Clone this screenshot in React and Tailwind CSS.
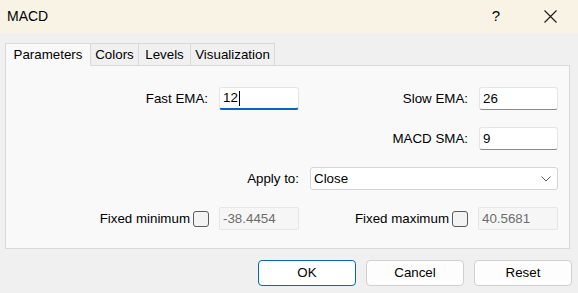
import React from "react";

function TextInput({ value, focused, w = "w-[80px]" }) {
  return (
    <div
      className={`${w} h-[23px] bg-white rounded-[3px] border border-[#e5e5e5] ${
        focused ? "border-b-2 border-b-[#0067c0]" : "border-b-[#8a8a8a]"
      } flex items-center pl-[3px] text-black`}
    >
      <span>{value}</span>
      {focused && <span className="inline-block w-px h-[15px] bg-black ml-[1px]" />}
    </div>
  );
}

function DisabledInput({ value }) {
  return (
    <div className="w-[80px] h-[23px] bg-[#f6f6f6] border border-[#e6e6e6] rounded-[2px] flex items-center pl-[3px] text-[#6d6d6d]">
      {value}
    </div>
  );
}

function Checkbox() {
  return <div className="w-[16px] h-[16px] rounded-[3px] border border-[#5b5b5b] bg-[#f3f3f3]" />;
}

function Tab({ label, selected, w }) {
  return (
    <div
      className={`${w} flex items-center justify-center border border-[#d9d9d9] border-b-0 ${
        selected ? "h-[23px] bg-[#f9f9f9] relative z-10 -mb-px pb-px" : "h-[22px] bg-[#f0f0f0] -ml-px"
      }`}
    >
      {label}
    </div>
  );
}

export default function App() {
  return (
    <div
      className="w-[578px] h-[293px] bg-[#f0f0f0] text-[13.33px] text-black overflow-hidden"
      style={{ fontFamily: '"Liberation Sans", Arial, sans-serif' }}
    >
      <div className="h-[33px] bg-[#f9f3e6] flex items-center pl-[7px]">
        <span className="text-[14px]">MACD</span>
        <span className="ml-auto text-[15px] mr-[44px] mt-[-1px]">?</span>
        <svg width="13" height="13" viewBox="0 0 13 13" className="mr-[21px]">
          <path d="M0.5 0.5 L12.5 12.5 M12.5 0.5 L0.5 12.5" stroke="#1a1a1a" strokeWidth="1.1" fill="none" />
        </svg>
      </div>

      <div className="px-[5px] pt-[10px]">
        <div className="flex items-end">
          <Tab label="Parameters" selected w="w-[86px]" />
          <Tab label="Colors" w="w-[49px]" />
          <Tab label="Levels" w="w-[53px]" />
          <Tab label="Visualization" w="w-[85px]" />
        </div>
        <div className="w-[565px] h-[184px] border border-[#d9d9d9] bg-[#f9f9f9] pt-[21px] pr-[11px] flex flex-col gap-[17px]">
          <div className="flex items-center h-[23px]">
            <div className="w-[293px] flex justify-end items-center gap-[11px]">
              <span>Fast EMA:</span>
              <TextInput value="12" focused />
            </div>
            <div className="flex-1 flex justify-end items-center gap-[11px]">
              <span>Slow EMA:</span>
              <TextInput value="26" w="w-[79px]" />
            </div>
          </div>
          <div className="flex items-center justify-end h-[23px] gap-[11px]">
            <span>MACD SMA:</span>
            <TextInput value="9" w="w-[79px]" />
          </div>
          <div className="flex items-center justify-end h-[23px] gap-[11px]">
            <span>Apply to:</span>
            <div className="w-[248px] h-[23px] bg-white border border-[#d5d5d5] rounded-[3px] flex items-center pl-[3px] pr-[6px]">
              <span>Close</span>
              <svg width="10" height="6" viewBox="0 0 10 6" className="ml-auto">
                <path d="M0.5 0.5 L5 5 L9.5 0.5" stroke="#5a5a5a" strokeWidth="1" fill="none" />
              </svg>
            </div>
          </div>
          <div className="flex items-center h-[23px]">
            <div className="w-[293px] flex justify-end items-center">
              <span>Fixed minimum</span>
              <div className="ml-[3px] mr-[10px]">
                <Checkbox />
              </div>
              <DisabledInput value="-38.4454" />
            </div>
            <div className="flex-1 flex justify-end items-center">
              <span>Fixed maximum</span>
              <div className="ml-[3px] mr-[10px]">
                <Checkbox />
              </div>
              <DisabledInput value="40.5681" />
            </div>
          </div>
        </div>
      </div>

      <div className="flex justify-end gap-[10px] pr-[6px] mt-[11px]">
        <button className="w-[98px] h-[26px] bg-white border border-[#0067c0] rounded-[4px] flex items-center justify-center">
          OK
        </button>
        <button className="w-[98px] h-[26px] bg-[#fdfdfd] border border-[#d0d0d0] rounded-[4px] flex items-center justify-center">
          Cancel
        </button>
        <button className="w-[98px] h-[26px] bg-[#fdfdfd] border border-[#d0d0d0] rounded-[4px] flex items-center justify-center">
          Reset
        </button>
      </div>
    </div>
  );
}
